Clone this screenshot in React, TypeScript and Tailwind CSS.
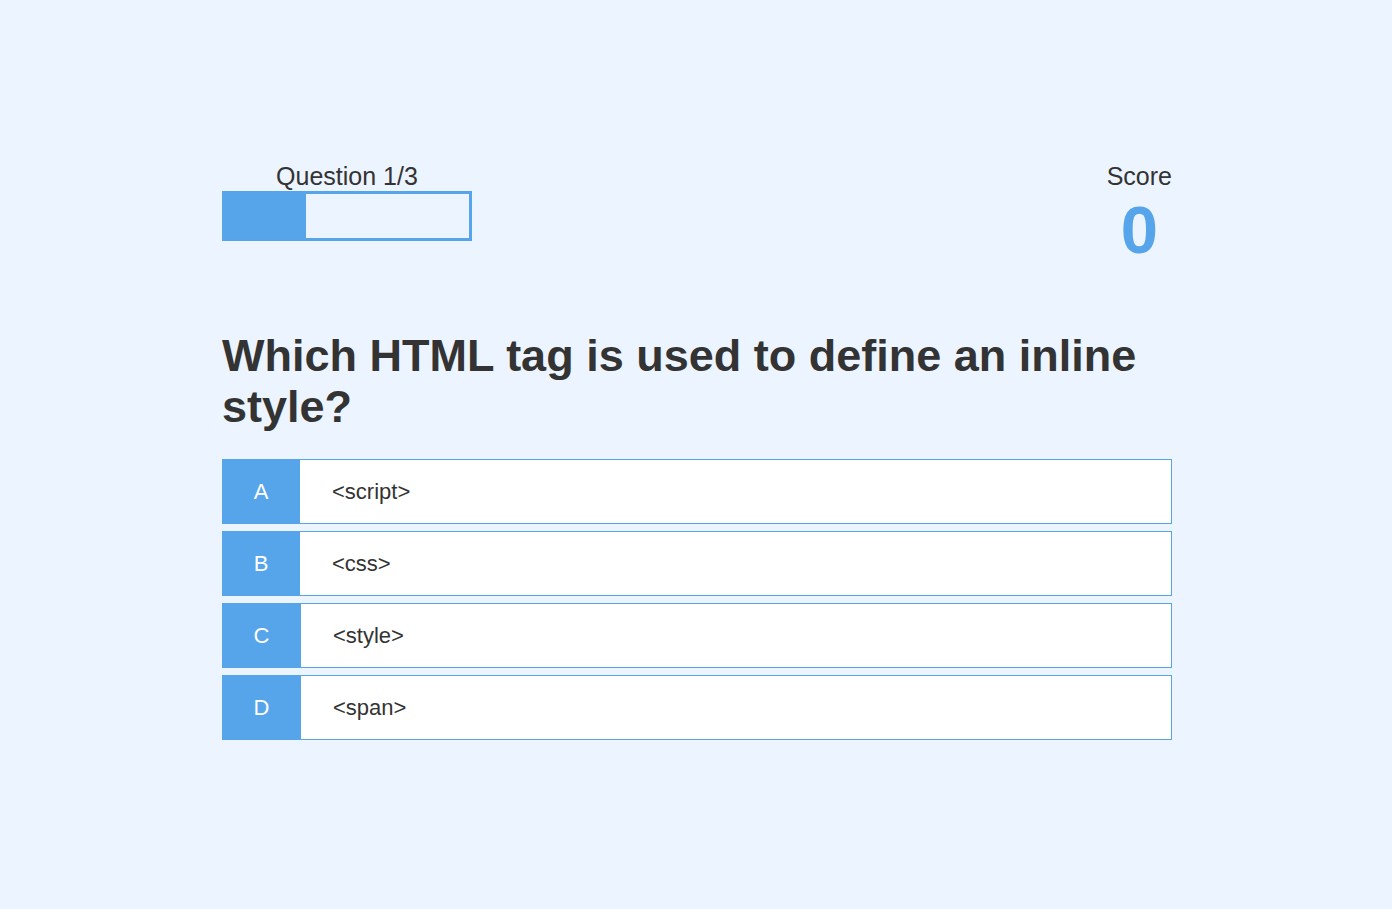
import React from "react";

const options = [
  { letter: "A", text: "<script>", w: "w-[78px]" },
  { letter: "B", text: "<css>", w: "w-[78px]" },
  { letter: "C", text: "<style>", w: "w-[79px]" },
  { letter: "D", text: "<span>", w: "w-[79px]" },
];

export default function App() {
  return (
    <div
      className="min-h-screen w-full bg-[#ecf4ff] text-[#333333]"
      style={{ fontFamily: '"Liberation Sans", Arial, sans-serif' }}
    >
      <div className="ml-[222px] w-[950px] pt-[162px]">
        <div className="flex items-start justify-between">
          <div className="flex w-[250px] flex-col items-center">
            <p className="text-[25px] leading-[28.75px]">Question 1/3</p>
            <div className="flex h-[50px] w-[250px]">
              <div className="h-full w-[84px] bg-[#56a5eb]" />
              <div className="h-full flex-1 border-[3px] border-l-0 border-[#56a5eb]" />
            </div>
          </div>
          <div className="flex flex-col items-center">
            <p className="text-[25px] leading-[28.75px]">Score</p>
            <p className="text-[67px] font-bold leading-[77px] text-[#56a5eb]">0</p>
          </div>
        </div>
        <h2 className="mt-[62px] mb-[26px] text-[45px] font-bold leading-[51.5px]">
          Which HTML tag is used to define an inline style?
        </h2>
        <div className="flex flex-col gap-[7px]">
          {options.map((o) => (
            <div
              key={o.letter}
              className="flex h-[65px] border border-[#56a5eb] bg-white text-[22px]"
            >
              <div
                className={`-my-px -ml-px flex shrink-0 items-center justify-center bg-[#56a5eb] text-white ${o.w}`}
              >
                {o.letter}
              </div>
              <div className="flex items-center pl-[32px]">{o.text}</div>
            </div>
          ))}
        </div>
      </div>
    </div>
  );
}
